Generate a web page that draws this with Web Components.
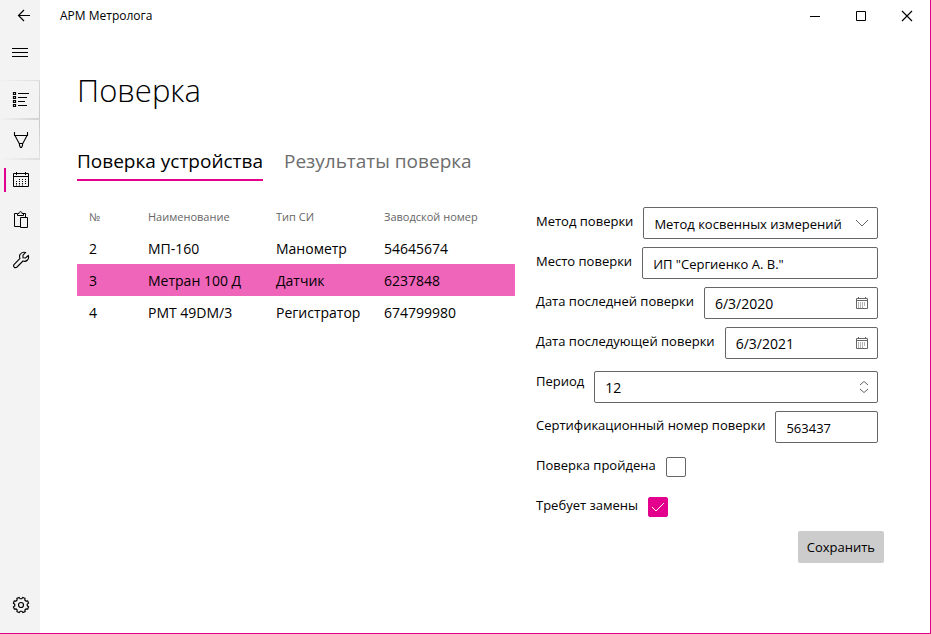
<!DOCTYPE html>
<html lang="ru">
<head>
<meta charset="utf-8">
<title>АРМ Метролога</title>
<style>
  html { height: 100%; }
  body { margin: 0; min-height: 100%; display: flex; background: #fff; color: #000;
    font-family: "Open Sans", "Noto Sans", sans-serif; font-size: 14px; --accent: #e3008c; }
</style>
</head>
<body>
<arm-app></arm-app>

<template id="app-tpl">
  <style>
    :host { flex: 1; display: grid; grid-template-columns: 40px minmax(0, 1fr); box-sizing: border-box;
      min-height: 100vh; border-right: 1px solid var(--accent); border-bottom: 1px solid var(--accent); }
    .main { display: flex; flex-direction: column; }
    main { padding: 36px 46px 24px 37px; }
    h1 { margin: 0; font-size: 31px; line-height: 44px; font-weight: 300; }
    .cols { display: grid; grid-template-columns: minmax(0, 438fr) minmax(0, 348fr); gap: 21px; margin-top: 19px; align-items: start; }
    form { display: flex; flex-direction: column; gap: 8px; margin-top: 7px; }
    .save { align-self: flex-end; height: 32px; padding: 0 9px; border: 0; border-radius: 2px;
      background: #ccc; color: #000; font: inherit; font-size: 13px; }
  </style>
  <arm-sidebar></arm-sidebar>
  <div class="main">
    <arm-titlebar>АРМ Метролога</arm-titlebar>
    <main>
      <h1>Поверка</h1>
      <arm-tabs></arm-tabs>
      <div class="cols">
        <arm-devices></arm-devices>
        <form>
          <arm-field kind="select" value="Метод косвенных измерений">Метод поверки</arm-field>
          <arm-field kind="text" value='ИП "Сергиенко А. В."'>Место поверки</arm-field>
          <arm-field kind="date" value="6/3/2020">Дата последней поверки</arm-field>
          <arm-field kind="date" value="6/3/2021">Дата последующей поверки</arm-field>
          <arm-field kind="number" value="12">Период</arm-field>
          <arm-field kind="text" value="563437">Сертификационный номер поверки</arm-field>
          <arm-check>Поверка пройдена</arm-check>
          <arm-check checked>Требует замены</arm-check>
          <button class="save" type="button">Сохранить</button>
        </form>
      </div>
    </main>
  </div>
</template>

<template id="sidebar-tpl">
  <style>
    :host { display: flex; flex-direction: column; background: #f3f3f3; padding-bottom: 8px; }
    nav { display: flex; flex-direction: column; margin-top: 8px; }
    button { display: flex; align-items: center; justify-content: center; box-sizing: border-box;
      width: 40px; height: 40px; padding: 0 0 0 2px; border: 0; background: none; color: #000; }
    svg { display: block; width: 18px; height: 18px; fill: none; stroke: currentColor; }
    .back { height: 32px; padding-left: 8px; }
    .menu { padding-left: 0; }
    .lit { background: linear-gradient(90deg, #f3f3f3, #d2d2d2) bottom / 100% 2px no-repeat,
      linear-gradient(90deg, #f3f3f3, #dcdcdc) top / 100% 1px no-repeat,
      linear-gradient(#d6d6d6, #c8c8c8) right / 1px 100% no-repeat; }
    .glow { background: linear-gradient(90deg, #f3f3f3, #dedede) bottom / 100% 2px no-repeat,
      linear-gradient(#c8c8c8, #e4e4e4) right / 1px 100% no-repeat; }
    .on { background: linear-gradient(var(--accent), var(--accent)) 4px center / 2px 24px no-repeat; }
    .settings { margin-top: auto; }
  </style>
  <button class="back" aria-label="Назад"><svg viewBox="0 0 18 18"><path d="M15 8.5H3.5M9 3L3.5 8.5L9 14" stroke-width="1.2"/></svg></button>
  <button class="menu" aria-label="Меню"><svg viewBox="0 0 18 18"><path d="M1 5.5H17M1 9.5H17M1 13.5H17"/></svg></button>
  <nav>
    <button class="lit" aria-label="Список"><svg viewBox="0 0 18 18"><path d="M1.5 1.5h2v2h-2zM1.5 5.5h2v2h-2zM1.5 9.5h2v2h-2zM1.5 13.5h2v2h-2z" stroke-width="1.2"/><path d="M6 2.5H17M6 6.5H15M6 10.5H13M6 14.5H15"/></svg></button>
    <button class="glow" aria-label="Фильтр"><svg viewBox="0 0 18 18"><path d="M2.500 1V4.500H15.500V1M3.200 5L7.200 12.500H10.800L14.800 5M7.500 13V14.500L8.500 16.500H9.500L10.500 14.500V13" stroke-width="1.100"/></svg></button>
    <button class="on" aria-label="Поверка"><svg viewBox="0 0 18 18"><path d="M1.500 2.500H16.500V15.500H1.500zM1.500 5.500H16.500M4.500 1V4M13.500 1V4"/><path d="M7 8.500H15M4 10.500H15M4 12.500H15M4 14H12" stroke-dasharray="1 2"/></svg></button>
    <button aria-label="Буфер"><svg viewBox="0 0 18 18"><path d="M8 15.5H2.5V2.5H5M11 2.5H13.5V6M5.500 4.500V2.500H7C7 0 10 0 10 2.500H11.500V4.500zM8.500 6.500H15.500V16.500H8.500z"/></svg></button>
    <button aria-label="Инструменты"><svg viewBox="0 0 18 18"><path d="M13.500 1.500Q10 .5 8 3.500Q7 5.500 8 7.500L2 13.500Q1 15 2.300 16.200Q3.600 17.200 5 16L11 10Q13.500 11 15.500 9Q17.200 7 16.300 4.500L13.500 7L11 6.800V4.200z" stroke-width="1.1"/></svg></button>
  </nav>
  <button class="settings" aria-label="Настройки"><svg viewBox="0 0 18 18"><path id="gear" stroke-width="1.200"/><circle cx="9" cy="9" r="2.500" stroke-width="1.200"/></svg></button>
</template>

<template id="titlebar-tpl">
  <style>
    :host { display: flex; align-items: center; height: 32px; font-size: 12px; }
    span { flex: 1; padding-left: 20px; line-height: 32px; }
    button { display: flex; align-items: center; justify-content: center; width: 46px; height: 32px; padding: 0; border: 0; background: none; color: #000; }
    svg { width: 12px; height: 12px; fill: none; stroke: currentColor; }
  </style>
  <span><slot></slot></span>
  <button aria-label="Свернуть"><svg viewBox="0 0 12 12"><path d="M1 6.500H11"/></svg></button>
  <button aria-label="Развернуть"><svg viewBox="0 0 12 12"><path d="M1.500 1.500H10.500V10.500H1.500z"/></svg></button>
  <button aria-label="Закрыть"><svg viewBox="0 0 12 12"><path d="M1 1L11 11M11 1L1 11" stroke-width="1.200"/></svg></button>
</template>

<template id="tabs-tpl">
  <style>
    :host { display: flex; gap: 21px; margin-top: 33px; }
    button { padding: 0 0 2px; border: 0; border-bottom: 2px solid transparent; background: none; color: #6d6d6d;
      font: inherit; font-size: 19px; line-height: 32px; height: 36px; }
    button.on { color: #000; border-color: var(--accent); }
  </style>
  <button class="on" role="tab" aria-selected="true">Поверка устройства</button>
  <button role="tab">Результаты поверка</button>
</template>

<template id="devices-tpl">
  <style>
    :host { display: block; }
    table { width: 100%; border-collapse: collapse; table-layout: fixed; }
    th, td { height: 32px; padding: 0 0 0 12px; text-align: left; white-space: nowrap; }
    th { font-size: 11px; font-weight: 400; color: #666; }
    th:nth-child(1) { width: 47px; } th:nth-child(2) { width: 116px; } th:nth-child(3) { width: 96px; }
    tr.sel { background: #ef65ba; }
  </style>
  <table>
    <thead><tr><th>№</th><th>Наименование</th><th>Тип СИ</th><th>Заводской номер</th></tr></thead>
    <tbody></tbody>
  </table>
</template>

<template id="field-tpl">
  <style>
    :host { display: flex; align-items: flex-start; gap: 10px; padding-right: 6px; }
    label { font-size: 13px; line-height: 29px; white-space: nowrap; }
    .box { flex: 1; min-width: 0; display: flex; box-sizing: border-box; height: 32px; border: 1px solid #666; border-radius: 2px; background: #fff; }
    :host([kind="number"]) .box { margin-top: 4px; }
    input, select { flex: 1; min-width: 0; width: 0; box-sizing: border-box; border: 0; padding: 1px 0 0 10px; margin: 0; background: none;
      color: #000; font: inherit; font-size: 13px; outline: 0; appearance: none; }
    :host([kind="date"]) input, :host([kind="number"]) input { font-size: 14px; }
    .icon { display: flex; align-items: center; padding: 0 8px 0 0; margin: 0; border: 0; background: none; color: #666; }
    :host([kind="number"]) .icon { padding-right: 6px; }
    svg { display: block; width: 14px; height: 14px; fill: none; stroke: currentColor; pointer-events: none; }
  </style>
  <label for="c"><slot></slot></label>
  <div class="box"></div>
</template>

<template id="check-tpl">
  <style>
    :host { display: flex; align-items: flex-start; gap: 10px; height: 32px; }
    label { font-size: 13px; line-height: 29px; white-space: nowrap; }
    .wrap { display: grid; margin-top: 6px; }
    input, svg { grid-area: 1 / 1; }
    input { appearance: none; box-sizing: border-box; width: 20px; height: 20px; margin: 0; border: 1px solid #666; border-radius: 2px; background: #fff; }
    input:checked { background: var(--accent); border-color: var(--accent); }
    svg { width: 20px; height: 20px; fill: none; stroke: #fff; pointer-events: none; visibility: hidden; }
    input:checked + svg { visibility: visible; }
  </style>
  <label for="c"><slot></slot></label>
  <div class="wrap"><input id="c" type="checkbox"><svg viewBox="0 0 20 20"><path d="M4 10L8 14L16 6"/></svg></div>
</template>

<script>
  const define = (name, tpl, init) => customElements.define(name, class extends HTMLElement {
    constructor() {
      super();
      this.attachShadow({ mode: "open" }).append(document.getElementById(tpl).content.cloneNode(true));
    }
    connectedCallback() { if (init) init(this, this.shadowRoot); }
  });

  define("arm-sidebar", "sidebar-tpl", (el, root) => {
    const pts = [];
    for (let i = 0; i < 8; i++) {
      [[-15, 6.3], [-9, 7.8], [9, 7.8], [15, 6.3]].forEach(([a, r]) => {
        const t = (i * 45 + 22 + a) * Math.PI / 180;
        pts.push((9 + r * Math.cos(t)).toFixed(2) + " " + (9 + r * Math.sin(t)).toFixed(2));
      });
    }
    root.getElementById("gear").setAttribute("d", "M" + pts.join("L") + "z");
  });
  define("arm-titlebar", "titlebar-tpl");
  define("arm-tabs", "tabs-tpl");
  define("arm-devices", "devices-tpl", (el, root) => {
    const rows = [["2", "МП-160", "Манометр", "54645674"], ["3", "Метран 100 Д", "Датчик", "6237848"], ["4", "РМТ 49DM/3", "Регистратор", "674799980"]];
    root.querySelector("tbody").innerHTML = rows.map((r, i) =>
      `<tr${i === 1 ? ' class="sel"' : ""}>${r.map(c => `<td>${c}</td>`).join("")}</tr>`).join("");
  });
  const icons = {
    select: '<span class="icon"><svg viewBox="0 0 14 14"><path d="M1 4L7 10L13 4"/></svg></span>',
    date: '<button type="button" class="icon" aria-label="Календарь"><svg viewBox="0 0 14 14"><path d="M1.500 2.500H12.500V12.500H1.500zM1.500 4.500H12.500M3.500 1V3M10.500 1V3"/><path d="M3 7H11M3 9H11M3 11H9" stroke-dasharray="1 1"/></svg></button>',
    number: '<button type="button" class="icon" aria-label="Изменить значение"><svg viewBox="0 0 14 14"><path d="M3 5L7 1.500L11 5M3 9L7 12.500L11 9"/></svg></button>',
    text: ""
  };
  define("arm-field", "field-tpl", (el, root) => {
    const kind = el.getAttribute("kind"), value = el.getAttribute("value");
    const box = root.querySelector(".box");
    const control = document.createElement(kind === "select" ? "select" : "input");
    control.id = "c";
    if (kind === "select") control.add(new Option(value));
    else { control.type = "text"; control.value = value; }
    box.innerHTML = icons[kind];
    box.prepend(control);
  });
  define("arm-check", "check-tpl", (el, root) => {
    root.querySelector("input").checked = el.hasAttribute("checked");
  });
  define("arm-app", "app-tpl");
</script>
</body>
</html>
